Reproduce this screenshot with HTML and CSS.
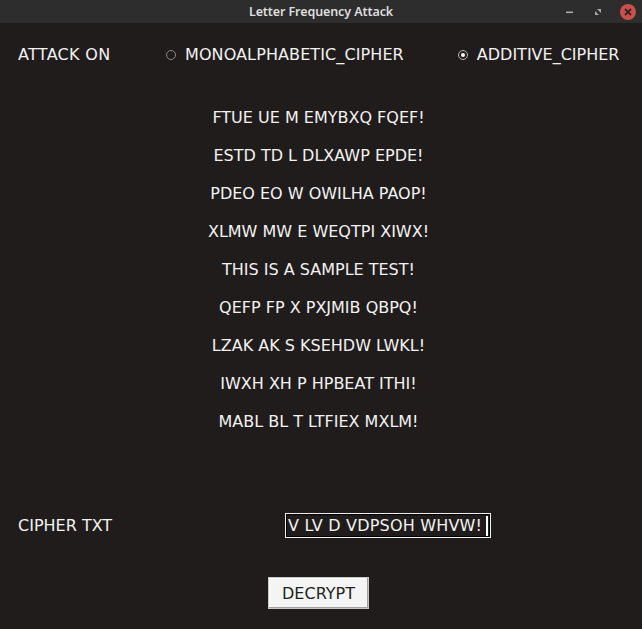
FILE: index.html
```html
<!DOCTYPE html>
<html>
<head>
<meta charset="utf-8">
<link rel="stylesheet" href="styles.css">
</head>
<body>
<div class="window">
  <div class="titlebar">
    <div class="title">Letter Frequency Attack</div>
    <div class="controls">
      <svg class="ctl" width="14" height="14" viewBox="0 0 14 14"><rect x="3" y="6.5" width="7" height="1.6" fill="#a8a8a8"/></svg>
      <svg class="ctl" width="14" height="14" viewBox="0 0 14 14"><path d="M4 10 L4 6 L8 10 Z M10 4 L10 8 L6 4 Z" fill="#a8a8a8"/></svg>
      <svg class="ctl close" width="18" height="18" viewBox="0 0 18 18"><circle cx="9" cy="9" r="8" fill="#c8514d"/><path d="M6 6 L12 12 M12 6 L6 12" stroke="#3a2020" stroke-width="1.8"/></svg>
    </div>
  </div>
  <div class="content">
    <div class="attack-row">
      <span class="label attack-label">ATTACK ON</span>
      <label class="radio r1"><span class="dot"></span><span class="label">MONOALPHABETIC_CIPHER</span></label>
      <label class="radio r2"><span class="dot checked"></span><span class="label">ADDITIVE_CIPHER</span></label>
    </div>
    <div class="list">
      <div class="line">FTUE UE M EMYBXQ FQEF!</div>
      <div class="line">ESTD TD L DLXAWP EPDE!</div>
      <div class="line">PDEO EO W OWILHA PAOP!</div>
      <div class="line">XLMW MW E WEQTPI XIWX!</div>
      <div class="line">THIS IS A SAMPLE TEST!</div>
      <div class="line">QEFP FP X PXJMIB QBPQ!</div>
      <div class="line">LZAK AK S KSEHDW LWKL!</div>
      <div class="line">IWXH XH P HPBEAT ITHI!</div>
      <div class="line">MABL BL T LTFIEX MXLM!</div>
    </div>
    <div class="cipher-row">
      <span class="label cipher-label">CIPHER TXT</span>
      <div class="entry">V LV D VDPSOH WHVW!<span class="cursor"></span></div>
    </div>
    <div class="button-row">
      <button class="btn">DECRYPT</button>
    </div>
  </div>
</div>
</body>
</html>
```

FILE: styles.css
```css
html, body {
  margin: 0;
  padding: 0;
}
body {
  width: 642px;
  height: 629px;
  overflow: hidden;
  background: #211c1c;
  font-family: "DejaVu Sans", sans-serif;
}
.window {
  width: 642px;
  height: 629px;
  display: flex;
  flex-direction: column;
}
.titlebar {
  height: 23px;
  background: #2d2d2d;
  display: flex;
  align-items: center;
  justify-content: center;
  position: relative;
  flex: none;
}
.title {
  font-family: "Noto Sans", "DejaVu Sans", sans-serif;
  font-weight: 600;
  font-size: 12.5px;
  color: #dedede;
  letter-spacing: -0.1px;
}
.controls {
  position: absolute;
  right: 5px;
  top: 3px;
  display: flex;
  align-items: center;
  gap: 14px;
}
.ctl {
  display: block;
}
.content {
  flex: 1;
  display: flex;
  flex-direction: column;
}
.label, .line {
  color: #f2f2f2;
  font-size: 16px;
  line-height: 20px;
  white-space: nowrap;
}
.attack-row {
  margin-top: 22px;
  display: flex;
  align-items: center;
  height: 20px;
  padding-left: 18px;
}
.attack-label {
  width: 148px;
  letter-spacing: 0.3px;
}
.radio {
  display: flex;
  align-items: center;
  gap: 9px;
}
.r1 .label {
  letter-spacing: 0.1px;
}
.r2 {
  margin-left: 54px;
}
.dot {
  width: 8px;
  height: 8px;
  border: 1px solid #8a8a8a;
  border-radius: 50%;
  box-sizing: content-box;
  display: flex;
  align-items: center;
  justify-content: center;
}
.dot.checked {
  border-color: #b8b8b8;
}
.dot.checked::after {
  content: "";
  width: 4px;
  height: 4px;
  border-radius: 50%;
  background: #ffffff;
}
.list {
  margin-top: 43px;
  display: flex;
  flex-direction: column;
  align-items: center;
  gap: 18px;
  padding-right: 5px;
}
.cipher-row {
  margin-top: 81px;
  display: flex;
  align-items: center;
  padding-left: 18px;
  height: 25px;
}
.cipher-label {
  width: 267px;
}
.entry {
  width: 200px;
  height: 21px;
  border: 1px solid #f0f0f0;
  outline: 1px solid #000;
  outline-offset: -2px;
  box-sizing: content-box;
  color: #f2f2f2;
  font-size: 16px;
  line-height: 21px;
  padding: 1px 2px;
  display: flex;
  align-items: center;
  white-space: nowrap;
  letter-spacing: 0.2px;
}
.cursor {
  display: inline-block;
  width: 2px;
  height: 20px;
  background: #ffffff;
  margin-left: 4px;
}
.button-row {
  margin-top: 39px;
  padding-left: 268px;
}
.btn {
  width: 101px;
  height: 32px;
  background: #f4f4f4;
  border: 1px solid #c8c8c8;
  box-shadow: inset -1px -1px 0 #a0a0a0, inset 1px 1px 0 #ffffff;
  color: #1e1e1e;
  font-family: "DejaVu Sans", sans-serif;
  font-size: 16px;
  padding: 0;
  margin: 0;
  cursor: default;
}
```
